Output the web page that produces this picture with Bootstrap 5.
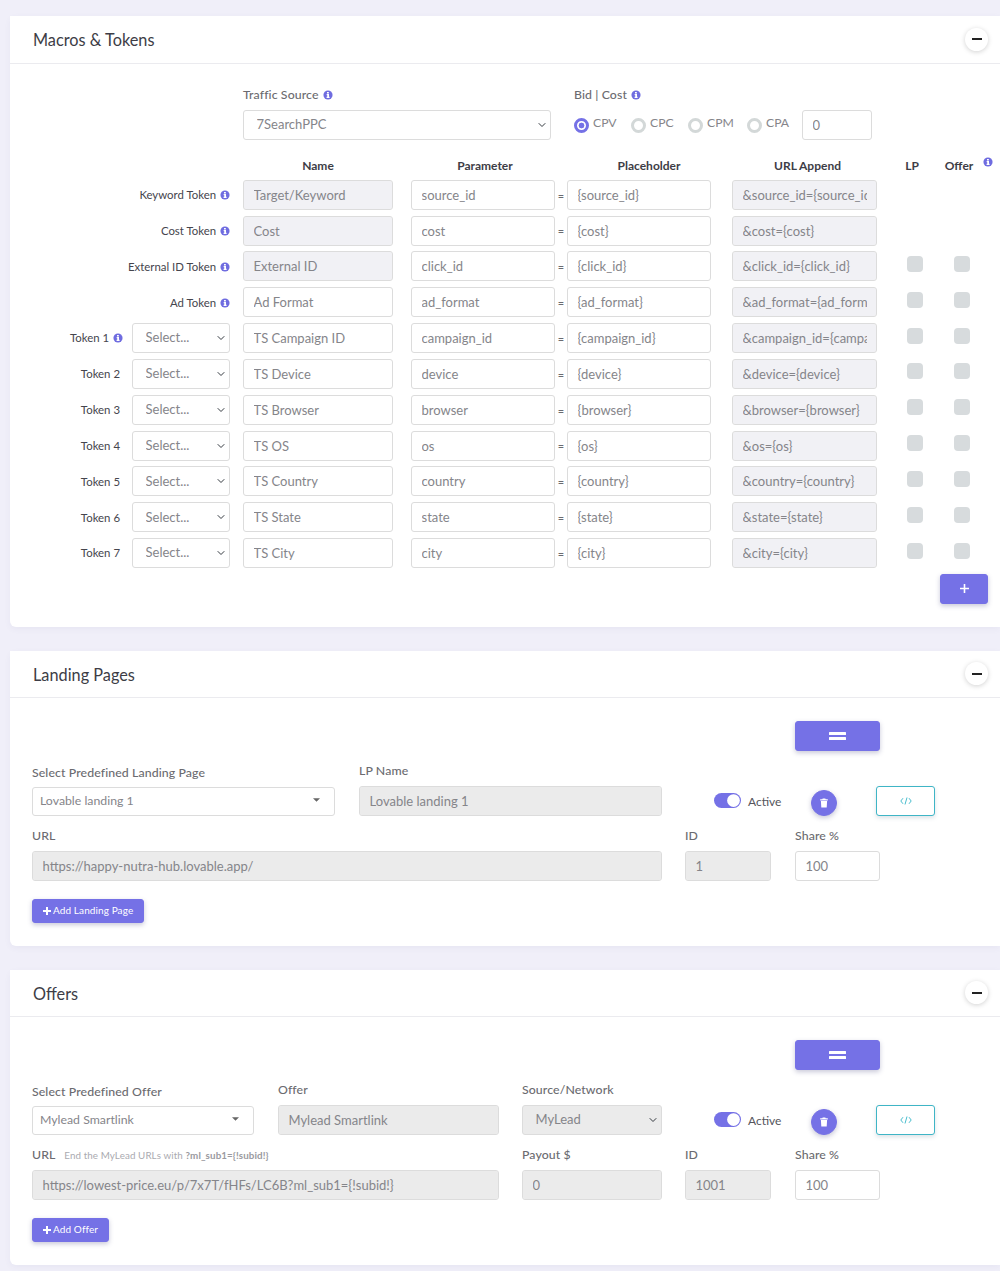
<!DOCTYPE html>
<html lang="en"><head><meta charset="utf-8"><title>Macros</title>
<link href="https://cdn.jsdelivr.net/npm/bootstrap@5.3.0/dist/css/bootstrap.min.css" rel="stylesheet">
<style>
html,body{height:1271px;overflow:hidden}
body{background:#f0eff9;font-family:Lato,sans-serif;color:#6b6b70;font-size:12px;padding:16px 0 0 10px}
.sect{border:0;border-radius:6px 0 0 6px;box-shadow:0 2px 6px rgba(90,90,140,.06);margin-bottom:24px;--bs-card-bg:#fff}
.sect-head{height:47.5px;background:#fff;border-bottom:1px solid #ebebef;padding:0 12px 0 23px;display:flex;align-items:center;justify-content:space-between}
.sect-title{font-size:16.3px;color:#3d3d46;margin:2px 0 0;font-weight:400}
.mini{width:23px;height:23px;padding:0;border-radius:50%;background:#fff;border:0;box-shadow:0 1px 5px rgba(0,0,0,.18);display:flex;align-items:center;justify-content:center}
.sect .form-control,.sect .form-select{height:30px;min-height:30px;font-size:13px;padding:0 9.5px;color:#85858a;border:1px solid #dcdcdc;border-radius:3px;box-shadow:none;font-family:inherit;opacity:1}
.sect .form-select{background-size:10px 8px;background-position:right 3px center;padding-left:12.5px}
.sect .ghost{background-color:#f1f1f5}
.sect .greyed{background-color:#ebebeb}
.sect .greyed.form-select{padding-left:12.5px}
.tok{display:grid;grid-template-columns:[lab]92px 8px [sel]98px 13px [nam]150px 18px [par]144px [eq]12px [ph]144px 21px [url]145px 30px [lp]16px 31px [of]16px 18px [inf]1fr;grid-auto-rows:30px;row-gap:5.83px;align-items:center;margin:0 0 0 22px}
.c-wide{grid-column:lab/nam;text-align:right;padding-right:13px}
.c-lab{grid-column:lab/sel;text-align:right;padding-right:12px}
.c-lab-i{padding-right:9px}
.c-sel{grid-column:sel/span 1}
.c-nam{grid-column:nam/span 1}
.c-par{grid-column:par/span 1}
.c-eq{grid-column:eq/span 1;text-align:center;font-size:11px;padding-top:2px}
.c-ph{grid-column:ph/span 1}
.c-url{grid-column:url/span 1}
.c-lp{grid-column:lp/span 1}
.c-of{grid-column:of/span 1}
.c-inf{grid-column:inf/span 1}
.tok-lab{color:#45454d;font-size:11.4px;line-height:1}
.tok-h{font-weight:700;color:#3d3d46;text-align:center;font-size:12px;height:16px;line-height:16px;align-self:end}
.nudge-par{margin-left:4px}.nudge-ph{margin-left:20px}.nudge-url{margin-left:6px}
.inf{vertical-align:-1px;margin-left:1px}
.tick{appearance:none;width:16px;height:16px;background:#d7dbdd;border-radius:4px;border:0;margin:-5px 0 0 0;display:block;opacity:1!important}
.sect .form-check-input.pick{width:15px;height:15px;border:3px solid #d3d8d8;background:#fff;margin:0;flex:none;opacity:1}
.sect .form-check-input.pick:checked{border-color:#7571e6;background:radial-gradient(circle,#7571e6 0 2.6px,#fff 3.2px)}
.top-row{display:flex;margin:0 0 0 233px;height:78.5px;padding-top:23.5px}
.cap{font-size:12.3px;color:#6b6b70;line-height:16px;margin:0 0 7px;font-weight:500;display:block;letter-spacing:.1px}
.pick-row{display:flex;align-items:center;height:30px;color:#85858a;font-size:12.2px}
.pick-row span{margin:0 0 3px 4px}
.w-a{width:38px}.w-b{width:40px}.w-c{width:32px}
.btn-vio{--bs-btn-bg:#7571e6;--bs-btn-border-color:#7571e6;--bs-btn-color:#fff;--bs-btn-hover-bg:#6a66da;--bs-btn-hover-color:#fff;box-shadow:0 2px 5px rgba(60,60,120,.28);border-radius:3px}
.big-plus{width:48px;height:30px;padding:0;margin:5.5px 0 0 930px;display:flex;align-items:center;justify-content:center}
.eq-btn{width:85px;height:30px;padding:0;display:flex;align-items:center;justify-content:center;margin-left:763px}
.add-btn{height:24px;padding:0 10px;font-size:10px;display:inline-flex;align-items:center;gap:2px;letter-spacing:.1px;margin-top:18px}
.low{padding:22.5px 0 0 22px}
.strip{display:flex;gap:24px;align-items:flex-end}
.strip-a{margin-top:12px}
.strip-b{margin-top:12px;gap:23px}
.lo-w1{width:303px}.lo-w2{width:303px}.lo-w3{width:630px}.lo-w4{width:86px}.lo-w5{width:85px;margin-left:1px}
.of-w1{width:222px}.of-w2{width:221px}.of-w3{width:140px;margin-left:-1px}.of-w4{width:467px}.of-w5{width:140px}
.sect .select-flat{font-size:12.3px;height:29px;min-height:29px;padding-left:7px;background-image:url("data:image/svg+xml,%3csvg xmlns='http://www.w3.org/2000/svg' viewBox='0 0 8 4'%3e%3cpath fill='%23666' d='M0 0h8L4 4z'/%3e%3c/svg%3e");background-size:7px 4px;background-position:right 14px top 10px}
.cap-low{position:relative;top:1px}
.acts{display:flex;align-items:center;height:30px;margin-left:28px}
.sw{display:flex;align-items:center;margin:0;padding:0;min-height:0}
.sect .sw .form-check-input{width:27px;height:15px;margin:0 7px 0 0;background-color:#7571e6;border:0;border-radius:8px;float:none;background-position:right center;background-size:15px 15px;background-image:url("data:image/svg+xml,%3csvg xmlns='http://www.w3.org/2000/svg' viewBox='-4 -4 8 8'%3e%3ccircle r='3.4' fill='%23fff'/%3e%3c/svg%3e")}
.sw-txt{color:#55555c;font-size:12px;position:relative;top:1px}
.bin{width:26px;height:26px;padding:0;border-radius:50%;margin:4px 0 0 30px;display:flex;align-items:center;justify-content:center;flex:none}
.code-b{width:59px;height:30px;padding:0;margin-left:39px;display:flex;align-items:center;justify-content:center;border:1px solid #3fb5c6;border-radius:3px;background:#fff;box-shadow:0 2px 4px rgba(60,100,120,.18);flex:none}
.tip{font-size:9.8px;color:#aaaab0;margin-left:6px;font-weight:400;line-height:1}
.tip b{color:#9a9aa0}
</style></head><body>
<svg width="0" height="0" class="position-absolute"><defs>
<symbol id="ic-i" viewBox="0 0 12 12"><circle cx="6" cy="6" r="5.5" fill="#6f6ce0"/><path fill="#fff" d="M4.8 2.4h2.2v1.7H4.8zM4.4 4.8h2.8v3.3h.7v1.4H4.3V8.1h.8V6.2h-.7z"/></symbol>
<symbol id="ic-trash" viewBox="0 0 10 10"><path fill="#fff" d="M3.7.5h2.6l.4.8h2.1v1.1H1.2V1.3h2.1zM1.9 3h6.2l-.4 6.5H2.3z"/></symbol>
</defs></svg>

<div class="card sect">
 <div class="sect-head"><h5 class="sect-title">Macros &amp; Tokens</h5><button class="mini" type="button"><svg width="10" height="2"><rect width="10" height="2" fill="#222"/></svg></button></div>
 <div class="top-row">
  <div style="width:308px"><label class="cap">Traffic Source <svg class="inf" width="10" height="10"><use href="#ic-i"/></svg></label>
   <select class="form-select"><option>7SearchPPC</option></select></div>
  <div style="margin-left:23px"><label class="cap">Bid | Cost <svg class="inf" width="10" height="10"><use href="#ic-i"/></svg></label>
   <div class="pick-row">
    <input class="form-check-input pick" type="radio" name="b" checked><span class="w-a">CPV</span>
    <input class="form-check-input pick" type="radio" name="b"><span class="w-a">CPC</span>
    <input class="form-check-input pick" type="radio" name="b"><span class="w-b">CPM</span>
    <input class="form-check-input pick" type="radio" name="b"><span class="w-c">CPA</span>
    <input class="form-control ms-1" style="width:70px" value="0">
   </div></div>
 </div>
 <div class="tok" style="margin-top:2px">
  <div class="tok-h c-nam">Name</div><div class="tok-h c-par nudge-par">Parameter</div><div class="tok-h c-ph nudge-ph">Placeholder</div><div class="tok-h c-url nudge-url">URL Append</div>
  <div class="tok-h c-lp d-flex justify-content-center" style="margin-left:-6px">LP</div><div class="tok-h c-of d-flex justify-content-center" style="margin-left:-6px">Offer</div>
  <div class="c-inf" style="margin-top:4px;margin-left:-5px"><svg width="10" height="10"><use href="#ic-i"/></svg></div>

  <div class="c-wide tok-lab">Keyword Token <svg class="inf" width="10" height="10"><use href="#ic-i"/></svg></div>
  <input class="form-control ghost c-nam" placeholder="" value="Target/Keyword" disabled><input class="form-control c-par" value="source_id"><div class="c-eq">=</div><input class="form-control c-ph" value="{source_id}"><input class="form-control ghost c-url" value="&amp;source_id={source_id}" disabled>

  <div class="c-wide tok-lab">Cost Token <svg class="inf" width="10" height="10"><use href="#ic-i"/></svg></div>
  <input class="form-control ghost c-nam" value="Cost" disabled><input class="form-control c-par" value="cost"><div class="c-eq">=</div><input class="form-control c-ph" value="{cost}"><input class="form-control ghost c-url" value="&amp;cost={cost}" disabled>

  <div class="c-wide tok-lab">External ID Token <svg class="inf" width="10" height="10"><use href="#ic-i"/></svg></div>
  <input class="form-control ghost c-nam" value="External ID" disabled><input class="form-control c-par" value="click_id"><div class="c-eq">=</div><input class="form-control c-ph" value="{click_id}"><input class="form-control ghost c-url" value="&amp;click_id={click_id}" disabled><input type="checkbox" class="tick c-lp" disabled><input type="checkbox" class="tick c-of" disabled>

  <div class="c-wide tok-lab">Ad Token <svg class="inf" width="10" height="10"><use href="#ic-i"/></svg></div>
  <input class="form-control c-nam" value="Ad Format"><input class="form-control c-par" value="ad_format"><div class="c-eq">=</div><input class="form-control c-ph" value="{ad_format}"><input class="form-control ghost c-url" value="&amp;ad_format={ad_format}" disabled><input type="checkbox" class="tick c-lp" disabled><input type="checkbox" class="tick c-of" disabled>

  <div class="c-lab c-lab-i tok-lab">Token 1 <svg class="inf" width="10" height="10"><use href="#ic-i"/></svg></div>
  <select class="form-select c-sel"><option>Select...</option></select><input class="form-control c-nam" value="TS Campaign ID"><input class="form-control c-par" value="campaign_id"><div class="c-eq">=</div><input class="form-control c-ph" value="{campaign_id}"><input class="form-control ghost c-url" value="&amp;campaign_id={campaign_id}" disabled><input type="checkbox" class="tick c-lp" disabled><input type="checkbox" class="tick c-of" disabled>

  <div class="c-lab tok-lab">Token 2</div>
  <select class="form-select c-sel"><option>Select...</option></select><input class="form-control c-nam" value="TS Device"><input class="form-control c-par" value="device"><div class="c-eq">=</div><input class="form-control c-ph" value="{device}"><input class="form-control ghost c-url" value="&amp;device={device}" disabled><input type="checkbox" class="tick c-lp" disabled><input type="checkbox" class="tick c-of" disabled>

  <div class="c-lab tok-lab">Token 3</div>
  <select class="form-select c-sel"><option>Select...</option></select><input class="form-control c-nam" value="TS Browser"><input class="form-control c-par" value="browser"><div class="c-eq">=</div><input class="form-control c-ph" value="{browser}"><input class="form-control ghost c-url" value="&amp;browser={browser}" disabled><input type="checkbox" class="tick c-lp" disabled><input type="checkbox" class="tick c-of" disabled>

  <div class="c-lab tok-lab">Token 4</div>
  <select class="form-select c-sel"><option>Select...</option></select><input class="form-control c-nam" value="TS OS"><input class="form-control c-par" value="os"><div class="c-eq">=</div><input class="form-control c-ph" value="{os}"><input class="form-control ghost c-url" value="&amp;os={os}" disabled><input type="checkbox" class="tick c-lp" disabled><input type="checkbox" class="tick c-of" disabled>

  <div class="c-lab tok-lab">Token 5</div>
  <select class="form-select c-sel"><option>Select...</option></select><input class="form-control c-nam" value="TS Country"><input class="form-control c-par" value="country"><div class="c-eq">=</div><input class="form-control c-ph" value="{country}"><input class="form-control ghost c-url" value="&amp;country={country}" disabled><input type="checkbox" class="tick c-lp" disabled><input type="checkbox" class="tick c-of" disabled>

  <div class="c-lab tok-lab">Token 6</div>
  <select class="form-select c-sel"><option>Select...</option></select><input class="form-control c-nam" value="TS State"><input class="form-control c-par" value="state"><div class="c-eq">=</div><input class="form-control c-ph" value="{state}"><input class="form-control ghost c-url" value="&amp;state={state}" disabled><input type="checkbox" class="tick c-lp" disabled><input type="checkbox" class="tick c-of" disabled>

  <div class="c-lab tok-lab">Token 7</div>
  <select class="form-select c-sel"><option>Select...</option></select><input class="form-control c-nam" value="TS City"><input class="form-control c-par" value="city"><div class="c-eq">=</div><input class="form-control c-ph" value="{city}"><input class="form-control ghost c-url" value="&amp;city={city}" disabled><input type="checkbox" class="tick c-lp" disabled><input type="checkbox" class="tick c-of" disabled>
 </div>
 <button class="btn btn-vio big-plus" type="button"><svg width="9" height="9"><path d="M3.7 0h1.6v3.7H9v1.6H5.3V9H3.7V5.3H0V3.7h3.7z" fill="#fff"/></svg></button>
 <div style="height:23px"></div>
</div>

<div class="card sect">
 <div class="sect-head"><h5 class="sect-title">Landing Pages</h5><button class="mini" type="button"><svg width="10" height="2"><rect width="10" height="2" fill="#222"/></svg></button></div>
 <div class="low">
  <button class="btn btn-vio eq-btn" type="button"><svg width="17" height="8"><rect width="17" height="3" rx=".5" fill="#fff"/><rect y="5" width="17" height="3" rx=".5" fill="#fff"/></svg></button>
  <div class="strip strip-a">
   <div class="lo-w1"><label class="cap cap-low">Select Predefined Landing Page</label><select class="form-select select-flat"><option>Lovable landing 1</option></select></div>
   <div class="lo-w2"><label class="cap">LP Name</label><input class="form-control greyed" value="Lovable landing 1" disabled></div>
   <div class="acts" style="margin-left:28px">
    <div class="form-check form-switch sw"><input class="form-check-input" type="checkbox" checked><span class="sw-txt">Active</span></div>
    <button class="btn btn-vio bin" type="button"><svg width="10" height="10"><use href="#ic-trash"/></svg></button>
    <button class="code-b" type="button"><svg width="12" height="8" viewBox="0 0 12 8" fill="none" stroke="#48bdcd" stroke-width="1"><path d="M3 1.2 .8 4 3 6.8M9 1.2 11.2 4 9 6.8M7 .5 5 7.5"/></svg></button>
   </div>
  </div>
  <div class="strip strip-b">
   <div class="lo-w3"><label class="cap">URL</label><input class="form-control greyed" value="https://happy-nutra-hub.lovable.app/" disabled></div>
   <div class="lo-w4"><label class="cap">ID</label><input class="form-control greyed" value="1" disabled></div>
   <div class="lo-w5"><label class="cap">Share %</label><input class="form-control" value="100"></div>
  </div>
  <button class="btn btn-vio add-btn" type="button"><svg width="8" height="8"><path d="M3 0h2v3h3v2H5v3H3V5H0V3h3z" fill="#fff"/></svg>Add Landing Page</button>
  <div style="height:23px"></div>
 </div>
</div>

<div class="card sect">
 <div class="sect-head"><h5 class="sect-title">Offers</h5><button class="mini" type="button"><svg width="10" height="2"><rect width="10" height="2" fill="#222"/></svg></button></div>
 <div class="low">
  <button class="btn btn-vio eq-btn" type="button"><svg width="17" height="8"><rect width="17" height="3" rx=".5" fill="#fff"/><rect y="5" width="17" height="3" rx=".5" fill="#fff"/></svg></button>
  <div class="strip strip-a">
   <div class="of-w1"><label class="cap cap-low">Select Predefined Offer</label><select class="form-select select-flat"><option>Mylead Smartlink</option></select></div>
   <div class="of-w2"><label class="cap">Offer</label><input class="form-control greyed" value="Mylead Smartlink" disabled></div>
   <div class="of-w3"><label class="cap">Source/Network</label><select class="form-select greyed"><option>MyLead</option></select></div>
   <div class="acts" style="margin-left:28px">
    <div class="form-check form-switch sw"><input class="form-check-input" type="checkbox" checked><span class="sw-txt">Active</span></div>
    <button class="btn btn-vio bin" type="button"><svg width="10" height="10"><use href="#ic-trash"/></svg></button>
    <button class="code-b" type="button"><svg width="12" height="8" viewBox="0 0 12 8" fill="none" stroke="#48bdcd" stroke-width="1"><path d="M3 1.2 .8 4 3 6.8M9 1.2 11.2 4 9 6.8M7 .5 5 7.5"/></svg></button>
   </div>
  </div>
  <div class="strip strip-b">
   <div class="of-w4"><label class="cap">URL <span class="tip">End the MyLead URLs with <b>?ml_sub1={!subid!}</b></span></label><input class="form-control greyed" value="https://lowest-price.eu/p/7x7T/fHFs/LC6B?ml_sub1={!subid!}" disabled></div>
   <div class="of-w5"><label class="cap">Payout $</label><input class="form-control greyed" value="0" disabled></div>
   <div class="lo-w4"><label class="cap">ID</label><input class="form-control greyed" value="1001" disabled></div>
   <div class="lo-w5"><label class="cap">Share %</label><input class="form-control" value="100"></div>
  </div>
  <button class="btn btn-vio add-btn" type="button"><svg width="8" height="8"><path d="M3 0h2v3h3v2H5v3H3V5H0V3h3z" fill="#fff"/></svg>Add Offer</button>
  <div style="height:23px"></div>
 </div>
</div>
<script src="https://cdn.jsdelivr.net/npm/bootstrap@5.3.0/dist/js/bootstrap.bundle.min.js"></script>
</body></html>
